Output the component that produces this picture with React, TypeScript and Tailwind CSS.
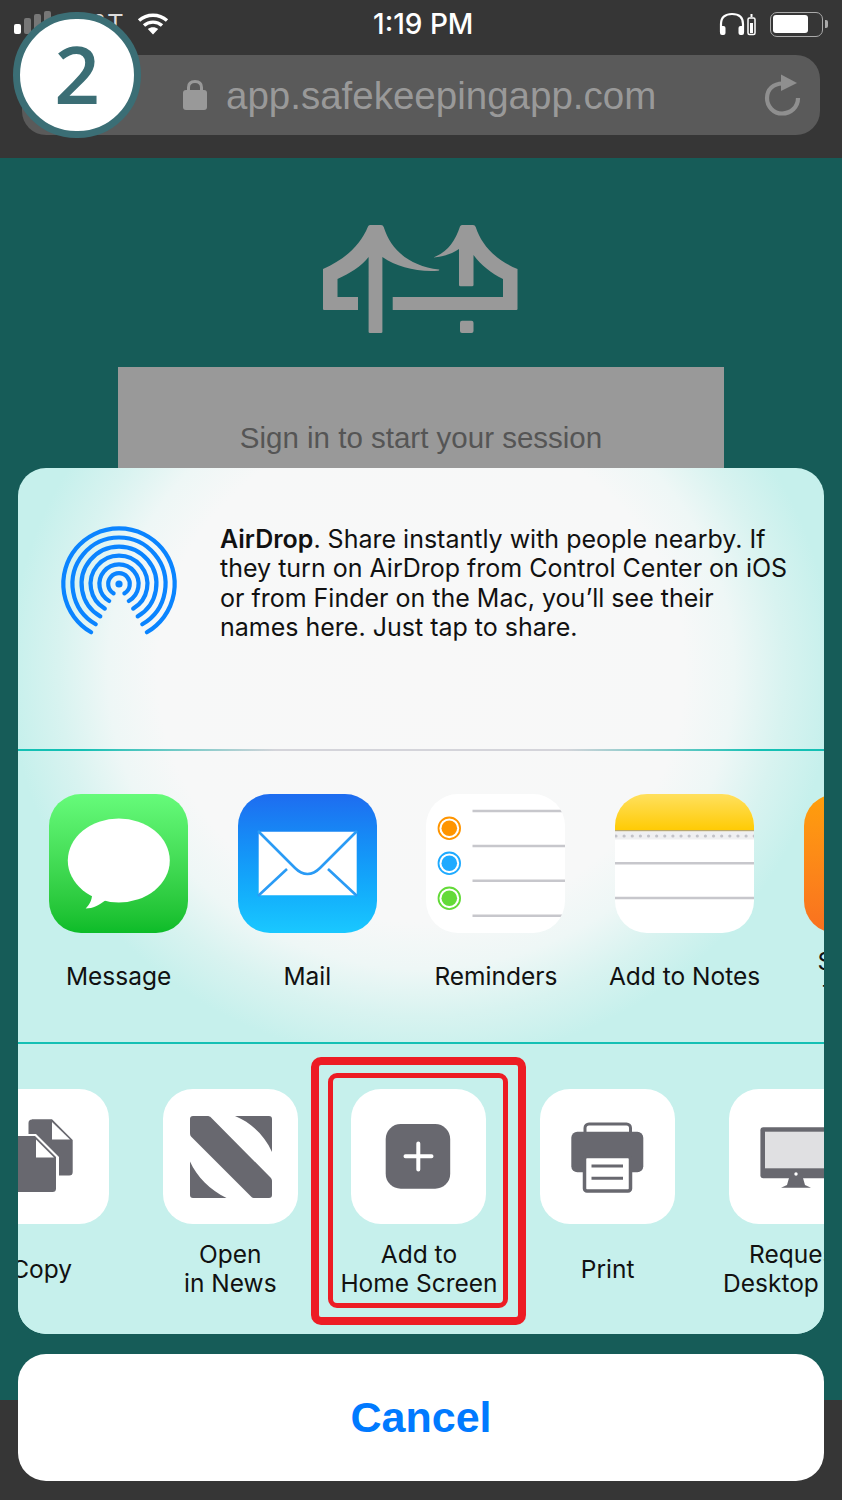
import React from "react";

const gray = "#68686f";

const rings = [55.7, 46.5, 37.4, 28.4, 19.6, 10.8];

const arcPath = (r: number) => {
  const dx = +(r * 0.5).toFixed(2);
  const dy = +(r * 0.866).toFixed(2);
  return `M${60 - dx} ${60 + dy}A${r} ${r} 0 1 1 ${60 + dx} ${60 + dy}`;
};

const AirDropIcon = () => (
  <svg width="120" height="120" viewBox="0 0 120 120" fill="none" stroke="#0a84ff" strokeWidth={4.2} strokeLinecap="round">
    {rings.map((r) => (
      <path key={r} d={arcPath(r)} />
    ))}
    <circle cx="60" cy="60" r="3.6" fill="#0a84ff" stroke="none" />
  </svg>
);

const MessageIcon = () => (
  <div className="w-[139px] h-[139px] rounded-[32px] bg-gradient-to-b from-[#66fb7a] to-[#0bbc28]">
    <svg width="139" height="139" viewBox="0 0 139 139" fill="#fff">
      <ellipse cx="69.8" cy="66.5" rx="51" ry="42" />
      <path d="M43 96C44 105 41 110 36.7 114.5C44 114.5 50 111 57 106Z" />
    </svg>
  </div>
);

const MailIcon = () => (
  <div className="w-[139px] h-[139px] rounded-[32px] bg-gradient-to-b from-[#1e6cf0] to-[#1ac8ff]">
    <svg width="139" height="139" viewBox="0 0 139 139" fill="none">
      <rect x="20.7" y="37.7" width="98" height="63.5" rx="2" fill="#fff" />
      <g stroke="#2a9bf5" strokeWidth="2.6">
        <path d="M20 37L57 74C65 82 74 82 82 74L119 37" />
        <path d="M20 102L49 75M119 102L90 75" />
      </g>
    </svg>
  </div>
);

const RemindersIcon = () => (
  <div className="w-[139px] h-[139px] rounded-[32px] bg-white overflow-hidden">
    <svg width="139" height="139" viewBox="0 0 139 139" fill="none">
      <g stroke="#c7c7cc" strokeWidth="2.6">
        <path d="M46.5 17H136" />
        <path d="M46.5 52H139" />
        <path d="M46.5 86.7H139" />
        <path d="M46.5 121.7H136" />
      </g>
      <circle cx="23.3" cy="34.3" r="10.8" stroke="#ff9500" strokeWidth="1.8" />
      <circle cx="23.3" cy="34.3" r="7.8" fill="#ff9500" />
      <circle cx="23.3" cy="69.3" r="10.8" stroke="#1eaaff" strokeWidth="1.8" />
      <circle cx="23.3" cy="69.3" r="7.8" fill="#1eaaff" />
      <circle cx="23.3" cy="104.3" r="10.8" stroke="#63da38" strokeWidth="1.8" />
      <circle cx="23.3" cy="104.3" r="7.8" fill="#63da38" />
    </svg>
  </div>
);

const noteDots = Array.from({ length: 18 }, (_, i) => i * 8.13 + 1);

const NotesIcon = () => (
  <div className="w-[139px] h-[139px] rounded-[32px] bg-white overflow-hidden">
    <svg width="139" height="139" viewBox="0 0 139 139" fill="none">
      <defs>
        <linearGradient id="noteTop" x1="0" y1="0" x2="0" y2="1">
          <stop offset="0" stopColor="#ffe05e" />
          <stop offset="1" stopColor="#ffcb05" />
        </linearGradient>
      </defs>
      <rect width="139" height="36" fill="url(#noteTop)" />
      <rect y="36" width="139" height="1.5" fill="#b9a86e" />
      <rect y="37.5" width="139" height="8" fill="#efeff1" />
      {noteDots.map((x) => (
        <circle key={x} cx={x} cy="42" r="1.6" fill="#c2c2c8" />
      ))}
      <path d="M0 69.3H139M0 104H139" stroke="#c7c7cc" strokeWidth="2.4" />
    </svg>
  </div>
);

const BooksIcon = () => <div className="w-[139px] h-[139px] rounded-[32px] bg-gradient-to-b from-[#ff9f0a] to-[#f9701f]" />;

const CopyIcon = () => (
  <svg width="135" height="135" viewBox="0 0 135 135">
    <path d="M58 30.3H78L98.7 51V83a3.5 3.5 0 0 1-3.5 3.5H58a3.5 3.5 0 0 1-3.5-3.5V34a3.5 3.5 0 0 1 3.5-3.5Z" fill={gray} />
    <path d="M78 33V50.5H96Z" fill="#fff" />
    <path d="M41 45H62L85 68V100a4.5 4.5 0 0 1-4.5 4.5H41a4.5 4.5 0 0 1-4.5-4.5V49a4 4 0 0 1 4.5-4Z" fill="#fff" />
    <path d="M41 47H61L82 68V99.5a3.5 3.5 0 0 1-3.5 3.5H41a3.5 3.5 0 0 1-3.5-3.5V50.5A3.5 3.5 0 0 1 41 47Z" fill={gray} />
    <path d="M62 50.5V68.5H80Z" fill="#fff" />
  </svg>
);

const NewsIcon = () => (
  <svg width="135" height="135" viewBox="0 0 135 135" fill={gray}>
    <path d="M30 27H44C46 27 47 27.5 48 28.5L107 88C108.5 89.5 109 90.5 109 92V106A3 3 0 0 1 106 109H92C90 109 89 108.5 88 107.5L28.5 48C27.5 47 27 46 27 44V30A3 3 0 0 1 30 27Z" />
    <path d="M72 27H106A3 3 0 0 1 109 30V63C102 47 89 34 72 27Z" />
    <path d="M27 72.5C34 88 47 101 63.5 109H30A3 3 0 0 1 27 106Z" />
  </svg>
);

const AddHomeIcon = () => (
  <svg width="135" height="135" viewBox="0 0 135 135">
    <rect x="34.7" y="35" width="64.5" height="64.7" rx="15" fill={gray} />
    <path d="M54.5 67.3H80.5M67.3 54.5V80.5" stroke="#fff" strokeWidth="4" strokeLinecap="round" />
  </svg>
);

const PrintIcon = () => (
  <svg width="135" height="135" viewBox="0 0 135 135">
    <rect x="45" y="35" width="45.5" height="14" rx="4" fill="#fff" stroke={gray} strokeWidth="3" />
    <rect x="31.3" y="42.7" width="72" height="40.6" rx="6" fill={gray} />
    <rect x="44.5" y="67.5" width="46" height="34.5" rx="2.5" fill="#fff" stroke={gray} strokeWidth="3.5" />
    <path d="M51.5 77H83M51.5 89.3H83" stroke={gray} strokeWidth="3" />
  </svg>
);

const DesktopIcon = () => (
  <svg width="135" height="135" viewBox="0 0 135 135">
    <rect x="31.4" y="38.3" width="72" height="51" rx="3" fill={gray} />
    <rect x="36" y="42.7" width="62.8" height="36.6" fill="#e0e0e2" />
    <circle cx="67" cy="85" r="1.7" fill="#fff" />
    <path d="M60 89H74L76 96L82 98.7H52L58 96Z" fill={gray} />
  </svg>
);

const ShareItem = ({ label, children, size, gap }: { label: string[]; children: React.ReactNode; size: string; gap: string }) => (
  <div className="w-[188.67px] shrink-0 flex flex-col items-center">
    <div className={size}>{children}</div>
    <div className={`${gap} h-[58px] flex flex-col justify-center items-center text-[24.5px] leading-[29px] text-[#111] whitespace-nowrap`}>
      {label.map((line) => (
        <span key={line}>{line}</span>
      ))}
    </div>
  </div>
);

const BridgeLogo = () => (
  <svg width="196" height="110" viewBox="323 224 196 110" fill="#999">
    <path d="M368 226.5Q368.5 225 370 225H381Q383 225 383.7 227C391 250 409 266 439 269.5Q440 270.2 438 270.7C416 272 397 267 382.4 257V332Q382.4 333 381 333H370Q368.6 333 368.6 332V257C361 267 350 273 337.5 279V297H358V310H324Q323 310 323 309V269C345 259 360 246 368 226.5Z" />
    <path d="M460 226.5Q460.5 225 462 225H473Q475 225 475.7 227C482 246 496 260 517.5 269V309Q517.5 310 516.5 310H392.7V297H503V279C491 273 481 265 473.5 255V285Q473.5 286.3 472 286.3H460.5Q459 286.3 459 285V249C453 253 444 257 433.5 257.5C447 252 455 242 460 226.5Z" />
    <rect x="460" y="320.7" width="13.5" height="12.3" rx="2" />
  </svg>
);

const iconBox = "w-[135px] h-[135px] rounded-[30px] bg-white";
const appBox = "w-[139px] h-[139px]";

export default function App() {
  return (
    <div className="relative w-[842px] h-[1500px] overflow-hidden bg-[#363636] font-['Inter',sans-serif]">
      <header className="h-[158px] bg-[#363636] px-[14px]">
        <div className="h-[55px] flex items-start relative">
          <div className="mt-[11px] flex items-end gap-[3px] h-[23px] shrink-0">
            <div className="w-[7px] h-[10px] rounded-[2px] bg-white" />
            <div className="w-[7px] h-[16px] rounded-[2px] bg-[#777]" />
            <div className="w-[7px] h-[20px] rounded-[2px] bg-[#777]" />
            <div className="w-[7px] h-[23px] rounded-[2px] bg-[#777]" />
          </div>
          <span className="ml-[10px] mt-[8px] shrink-0 whitespace-nowrap text-[25px] leading-[30px] text-[#ddd] font-['Liberation_Sans',sans-serif]">AT&amp;T</span>
          <svg className="ml-[14px] mt-[12px] shrink-0" width="32" height="24" viewBox="0 0 32 24" fill="none" stroke="#fff" strokeWidth="3.4">
            <path d="M2 8.5C10 1.5 22 1.5 30 8.5" />
            <path d="M7 13.5C12 9 20 9 25 13.5" />
            <path d="M16 22.5L10.8 17C14 14.5 18 14.5 21.2 17Z" fill="#fff" stroke="none" />
          </svg>
          <span className="ml-[204px] mt-[8px] shrink-0 whitespace-nowrap text-[28px] leading-[32px] text-white font-medium">1:19 PM</span>
          <svg className="ml-[246px] mt-[12px] shrink-0" width="40" height="24" viewBox="0 0 40 24" fill="none" stroke="#fff" strokeWidth="2.2">
            <path d="M2 20V12C2 5 6.5 2 13 2S24 5 24 12V20" />
            <rect x="1" y="14" width="5.5" height="9" rx="2" fill="#fff" stroke="none" />
            <rect x="19.5" y="14" width="5.5" height="9" rx="2" fill="#fff" stroke="none" />
            <rect x="29" y="6" width="7" height="16.5" rx="1.5" strokeWidth="1.5" />
            <rect x="31" y="11" width="3" height="10" fill="#fff" stroke="none" />
            <rect x="31.5" y="2" width="2" height="3" fill="#fff" stroke="none" />
          </svg>
          <div className="ml-[11px] mt-[12px] shrink-0 w-[53px] h-[25px] rounded-[7px] border border-[#aaa] p-[2px]">
            <div className="w-[35px] h-[18px] rounded-[3px] bg-white" />
          </div>
          <div className="ml-[2px] mt-[20px] shrink-0 w-[3px] h-[8px] rounded-r-[2px] bg-[#aaa]" />
        </div>
        <div className="ml-[8px] w-[798px] h-[80px] rounded-[24px] bg-[#5a5a5a] flex items-center">
          <svg className="ml-[160px] shrink-0" width="26" height="32" viewBox="0 0 26 32" fill="none">
            <path d="M6.5 13V8.5C6.5 4.5 9 2.5 13 2.5S19.5 4.5 19.5 8.5V13" stroke="#999" strokeWidth="3" />
            <rect x="1" y="11" width="24" height="20" rx="3" fill="#999" />
          </svg>
          <span className="ml-[18px] pt-[1px] whitespace-nowrap text-[38.5px] leading-[46px] text-[#999] font-['Liberation_Sans',sans-serif]">app.safekeepingapp.com</span>
          <svg className="ml-[108px] shrink-0" width="38" height="44" viewBox="0 0 38 44" fill="none">
            <path d="M18.5 10.5C9.5 10.5 3 16.5 3 25C3 33.5 9.5 40.5 18 40.5C27 40.5 34 34 34 25" stroke="#8f8f8f" strokeWidth="4.2" />
            <path d="M17 1.5L33 10L17 18Z" fill="#8f8f8f" />
          </svg>
        </div>
      </header>

      <main className="h-[1242px] bg-[#165c58] flex flex-col items-center">
        <div className="mt-[66px]">
          <BridgeLogo />
        </div>
        <div className="mt-[33px] w-[606px] h-[200px] bg-[#999] pt-[53px] text-center text-[29.5px] leading-[36px] text-[#555] font-['Liberation_Sans',sans-serif]">
          Sign in to start your session
        </div>
      </main>

      <div className="absolute left-[18px] top-[468px] w-[806px] flex flex-col gap-5">
        <section className="relative rounded-[28px] overflow-hidden bg-[#c6f0ec] bg-[radial-gradient(ellipse_412px_392px_at_50%_203px,#f8f8f8_0%,#f7f8f8_64%,#eef7f6_76%,#d8f3f0_88%,#c6f0ec_100%)]">
          <div className="h-[281px] flex items-start">
            <div className="ml-[41px] mt-[56px]">
              <AirDropIcon />
            </div>
            <p className="ml-[41px] mt-[57px] text-[25px] leading-[29.4px] text-[#111] whitespace-nowrap">
              <span className="font-semibold">AirDrop</span>. Share instantly with people nearby. If
              <br />
              they turn on AirDrop from Control Center on iOS
              <br />
              or from Finder on the Mac, you’ll see their
              <br />
              names here. Just tap to share.
            </p>
          </div>
          <div className="h-[2px] bg-[linear-gradient(to_right,#14c0b4_8%,#d4d4da_32%,#d4d4da_68%,#14c0b4_92%)]" />
          <div className="h-[291px] pt-[43px] pl-[6.3px] flex">
            <ShareItem label={["Message"]} size={appBox} gap="mt-[14px]">
              <MessageIcon />
            </ShareItem>
            <ShareItem label={["Mail"]} size={appBox} gap="mt-[14px]">
              <MailIcon />
            </ShareItem>
            <ShareItem label={["Reminders"]} size={appBox} gap="mt-[14px]">
              <RemindersIcon />
            </ShareItem>
            <ShareItem label={["Add to Notes"]} size={appBox} gap="mt-[14px]">
              <NotesIcon />
            </ShareItem>
            <ShareItem label={["Save PDF", "to Books"]} size={appBox} gap="mt-[14px]">
              <BooksIcon />
            </ShareItem>
          </div>
          <div className="h-[2px] bg-[#14c0b4]" />
          <div className="relative h-[290px] bg-[#c6f0ec] pt-[45px] flex overflow-hidden">
            <div className="ml-[-70.7px] flex">
              <ShareItem label={["Copy"]} size={iconBox} gap="mt-4">
                <CopyIcon />
              </ShareItem>
              <ShareItem label={["Open", "in News"]} size={iconBox} gap="mt-4">
                <NewsIcon />
              </ShareItem>
              <ShareItem label={["Add to", "Home Screen"]} size={iconBox} gap="mt-4">
                <AddHomeIcon />
              </ShareItem>
              <ShareItem label={["Print"]} size={iconBox} gap="mt-4">
                <PrintIcon />
              </ShareItem>
              <ShareItem label={["Request", "Desktop Site"]} size={iconBox} gap="mt-4">
                <DesktopIcon />
              </ShareItem>
            </div>
            <div className="absolute left-[293px] top-[13px] w-[215px] h-[268px] rounded-[10px] border-[8px] border-[#ed1c24]" />
            <div className="absolute left-[310px] top-[29px] w-[180px] h-[235px] rounded-[9px] border-[5px] border-[#ed1c24]" />
          </div>
        </section>
        <button className="h-[127px] rounded-[28px] bg-white text-[43px] font-bold text-[#007aff] font-['Liberation_Sans',sans-serif]">Cancel</button>
      </div>

      <div className="absolute left-[13px] top-[12px] w-[128px] h-[126px] rounded-full bg-white border-[7px] border-[#3b6e75] flex items-center justify-center">
        <span className="pb-[5px] text-[80px] leading-none font-semibold text-[#3b6e75] font-['Open_Sans',sans-serif]">2</span>
      </div>
    </div>
  );
}
